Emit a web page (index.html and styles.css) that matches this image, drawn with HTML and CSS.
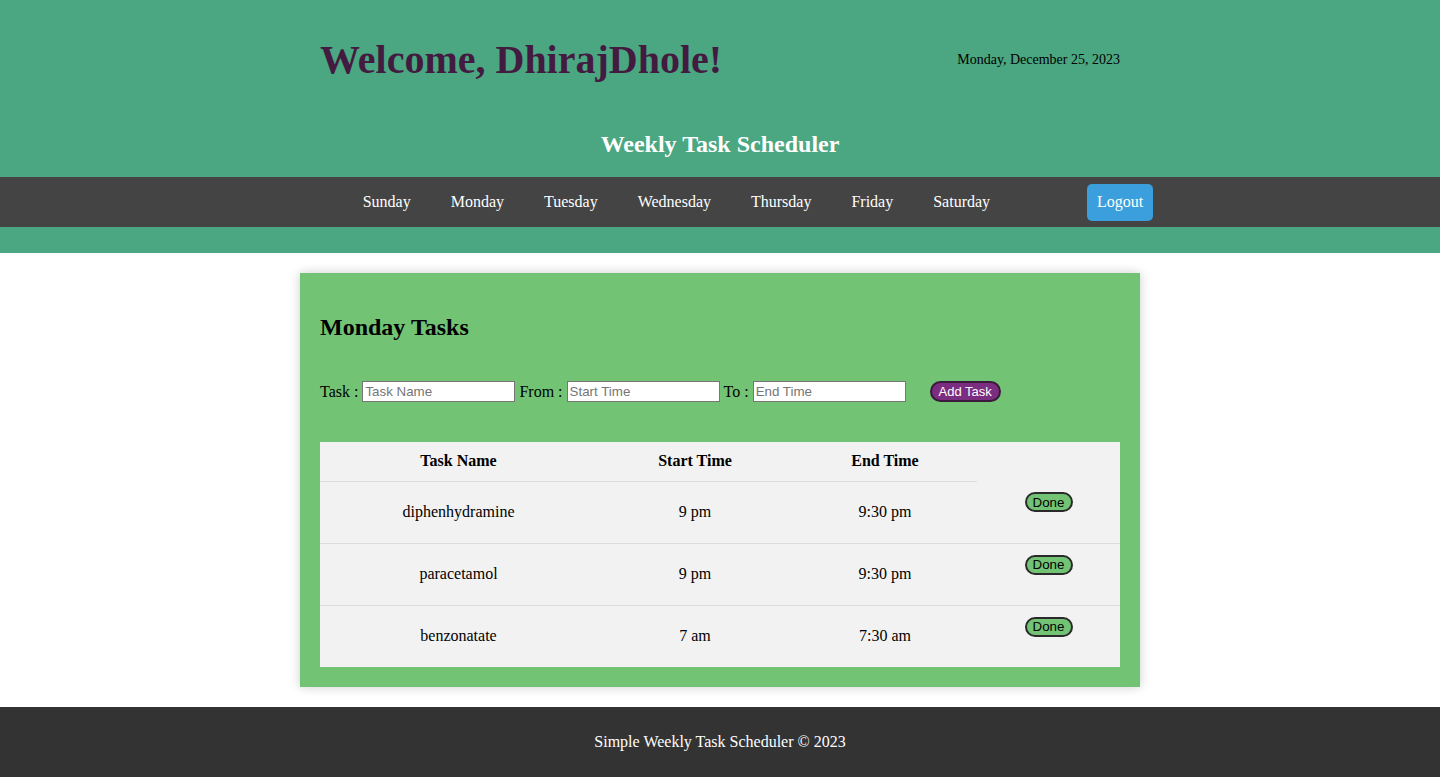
FILE: index.html
```html
<!DOCTYPE html>
<html>
<head>
<meta charset="utf-8">
<link rel="stylesheet" href="styles.css">
</head>
<body>
<header class="site-header">
  <div class="top-row">
    <h1 class="welcome">Welcome, DhirajDhole!</h1>
    <div class="date">Monday, December 25, 2023</div>
  </div>
  <h2 class="app-title">Weekly Task Scheduler</h2>
  <nav class="nav">
    <ul class="days">
      <li><a href="#">Sunday</a></li>
      <li><a href="#">Monday</a></li>
      <li><a href="#">Tuesday</a></li>
      <li><a href="#">Wednesday</a></li>
      <li><a href="#">Thursday</a></li>
      <li><a href="#">Friday</a></li>
      <li><a href="#">Saturday</a></li>
    </ul>
    <button class="logout">Logout</button>
  </nav>
</header>
<main class="main">
  <section class="card">
    <h2 class="card-title">Monday Tasks</h2>
    <form class="task-form">
      <label>Task : <input type="text" placeholder="Task Name"></label>
      <label>From : <input type="text" placeholder="Start Time"></label>
      <label>To : <input type="text" placeholder="End Time"></label>
      <button type="button" class="add-btn">Add Task</button>
    </form>
    <table class="tasks">
      <colgroup>
        <col class="c1"><col class="c2"><col class="c3"><col class="c4">
      </colgroup>
      <thead>
        <tr><th>Task Name</th><th>Start Time</th><th>End Time</th></tr>
      </thead>
      <tbody>
        <tr><td>diphenhydramine</td><td>9 pm</td><td>9:30 pm</td><td class="act"><button class="done">Done</button></td></tr>
        <tr><td>paracetamol</td><td>9 pm</td><td>9:30 pm</td><td class="act"><button class="done">Done</button></td></tr>
        <tr><td>benzonatate</td><td>7 am</td><td>7:30 am</td><td class="act"><button class="done">Done</button></td></tr>
      </tbody>
    </table>
  </section>
</main>
<footer class="footer">Simple Weekly Task Scheduler © 2023</footer>
</body>
</html>
```
FILE: styles.css
```css
* { box-sizing: border-box; }
body {
  margin: 0;
  font-family: "Liberation Serif", "Times New Roman", serif;
  font-size: 16px;
  color: #000;
  background: #fff;
}
.site-header {
  background: #4aa781;
  padding-top: 37px;
  padding-bottom: 26px;
}
.top-row {
  width: 800px;
  margin: 0 auto;
  display: flex;
  justify-content: space-between;
  align-items: center;
}
.welcome {
  margin: 0;
  font-size: 40px;
  line-height: 46px;
  color: #441b40;
  font-weight: bold;
}
.date {
  font-size: 14px;
}
.app-title {
  margin: 47px 0 19px;
  text-align: center;
  color: #fff;
  font-size: 24px;
  line-height: 28px;
}
.nav {
  background: #444;
  height: 50px;
  display: flex;
  justify-content: center;
  align-items: center;
  padding-left: 56px;
}
.days {
  list-style: none;
  margin: 0;
  padding: 0;
  display: flex;
}
.days a {
  display: block;
  padding: 0 20px;
  color: #fff;
  text-decoration: none;
  line-height: 50px;
}
.logout {
  margin-left: 77px;
  background: #3a9fdc;
  color: #fff;
  border: none;
  border-radius: 5px;
  font-family: inherit;
  font-size: 16px;
  height: 37px;
  padding: 0 10px;
}
.main {
  padding: 20px 0;
}
.card {
  width: 840px;
  margin: 0 auto;
  background: #72c374;
  padding: 20px;
  box-shadow: 0 0 10px rgba(0,0,0,0.2);
}
.card-title {
  margin: 20px 0 40px;
  font-size: 24px;
  line-height: 28px;
}
.task-form {
  margin: 0 0 40px;
  display: flex;
  align-items: center;
  height: 21px;
}
.task-form label {
  display: flex;
  align-items: center;
  gap: 4px;
  margin-right: 4px;
}
.task-form input {
  width: 153px;
  height: 21px;
  font-family: "Liberation Sans", Arial, sans-serif;
  font-size: 13.33px;
  border: 1px solid #767676;
  padding: 1px 2px;
}
.add-btn {
  margin-left: 20px;
  background: #7b2d7f;
  color: #fff;
  border: 2px solid #3a1a3a;
  border-radius: 11px;
  font-family: "Liberation Sans", Arial, sans-serif;
  font-size: 13px;
  height: 21px;
  width: 71px;
  padding: 0;
}
.tasks {
  width: 800px;
  border-collapse: collapse;
  background: #f2f2f2;
  table-layout: fixed;
}
.c1 { width: 277px; }
.c2 { width: 196px; }
.c3 { width: 184px; }
.c4 { width: 143px; }
.tasks th {
  height: 39px;
  font-weight: bold;
  text-align: center;
  border-bottom: 1px solid #ddd;
  padding: 0;
}
.tasks td {
  height: 62px;
  text-align: center;
  padding: 0;
  border-bottom: 1px solid #ddd;
}
.tasks tbody tr:last-child td { border-bottom: none; }
.tasks td.act {
  vertical-align: top;
  padding-top: 11px;
}
.done {
  background: #72c374;
  color: #000;
  border: 2px solid #2a2a2a;
  border-radius: 10px;
  font-family: "Liberation Sans", Arial, sans-serif;
  font-size: 13.33px;
  width: 48px;
  height: 20px;
  padding: 0;
}
.footer {
  background: #333;
  color: #fff;
  height: 70px;
  display: flex;
  align-items: center;
  justify-content: center;
}
```
